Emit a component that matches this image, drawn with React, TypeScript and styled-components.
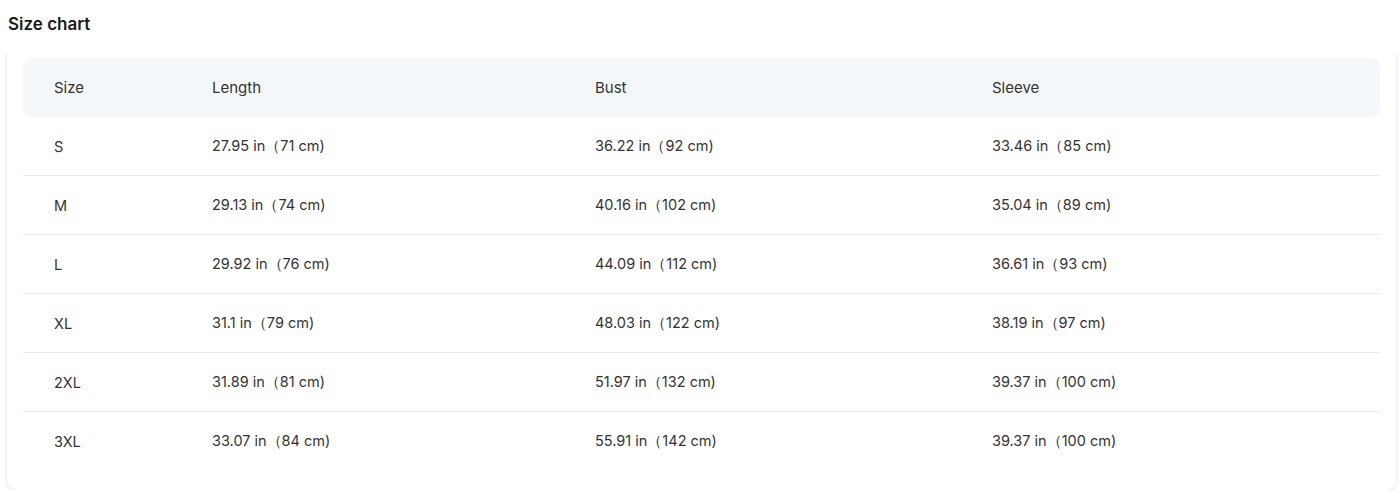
import styled, { createGlobalStyle } from "styled-components";

const GlobalStyle = createGlobalStyle`
  body {
    margin: 0;
    background: #fff;
    font-family: Inter, "Noto Sans", "Liberation Sans", sans-serif;
    color: #2b2b2b;
  }
`;

const Page = styled.div`
  padding: 13px 7px 0 7px;
  width: 1389px;
`;

const Title = styled.h2`
  margin: 0 0 0 1px;
  font-size: 17px;
  font-weight: 600;
  line-height: 22px;
  color: #1a1a1a;
  letter-spacing: 0;
`;

const Card = styled.div`
  margin-top: 16px;
  background: #fff;
  border-radius: 0 0 10px 10px;
  box-shadow: 0 1px 4px rgba(0, 0, 0, 0.12);
  clip-path: inset(2px -8px -8px -8px);
  padding: 7px 16px 19px 16px;
`;

const Row = styled.div<{ $head?: boolean; $last?: boolean }>`
  display: grid;
  grid-template-columns: 158px 383px 397px 1fr;
  align-items: center;
  height: 59px;
  box-sizing: border-box;
  background: ${(p) => (p.$head ? "#f4f7fa" : "transparent")};
  border-radius: ${(p) => (p.$head ? "10px" : "0")};
  border-bottom: ${(p) => (p.$head || p.$last ? "none" : "1px solid #ececec")};
  font-size: ${(p) => (p.$head ? "15px" : "14.5px")};
`;

const Cell = styled.div`
  padding-left: 31px;
  color: #333;
  white-space: nowrap;
`;

const rows = [
  ["S", "27.95 in（71 cm)", "36.22 in（92 cm)", "33.46 in（85 cm)"],
  ["M", "29.13 in（74 cm)", "40.16 in（102 cm)", "35.04 in（89 cm)"],
  ["L", "29.92 in（76 cm)", "44.09 in（112 cm)", "36.61 in（93 cm)"],
  ["XL", "31.1 in（79 cm)", "48.03 in（122 cm)", "38.19 in（97 cm)"],
  ["2XL", "31.89 in（81 cm)", "51.97 in（132 cm)", "39.37 in（100 cm)"],
  ["3XL", "33.07 in（84 cm)", "55.91 in（142 cm)", "39.37 in（100 cm)"],
];

export default function App() {
  return (
    <Page>
      <GlobalStyle />
      <Title>Size chart</Title>
      <Card>
        <Row $head>
          <Cell>Size</Cell>
          <Cell>Length</Cell>
          <Cell>Bust</Cell>
          <Cell>Sleeve</Cell>
        </Row>
        {rows.map((r, i) => (
          <Row key={r[0]} $last={i === rows.length - 1}>
            {r.map((c, j) => (
              <Cell key={j}>{c}</Cell>
            ))}
          </Row>
        ))}
      </Card>
    </Page>
  );
}
